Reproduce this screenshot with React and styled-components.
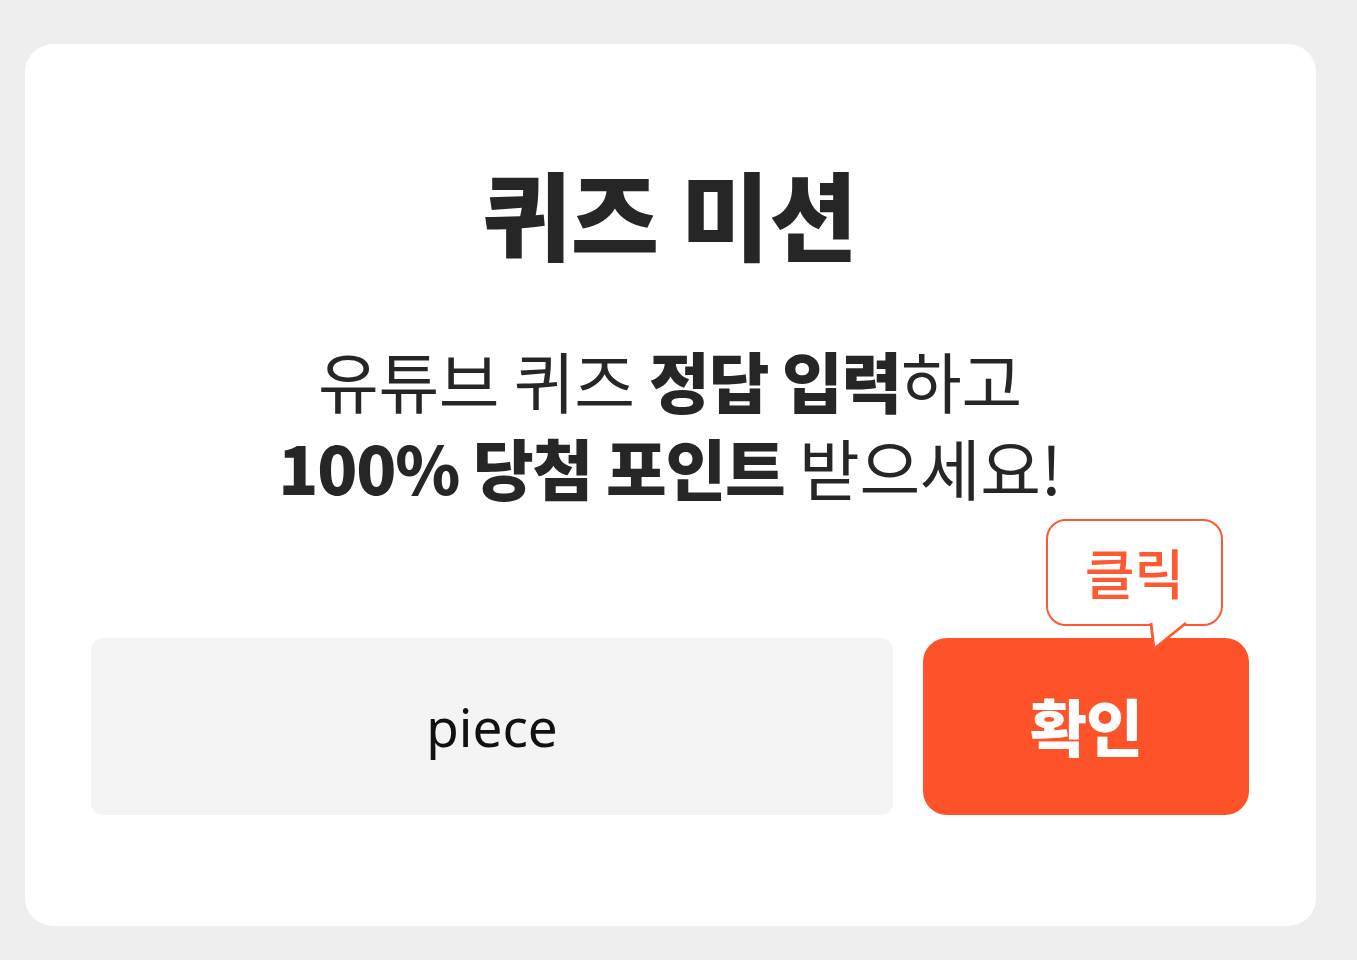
import React from 'react'
import styled, { createGlobalStyle } from 'styled-components'

const GlobalStyle = createGlobalStyle`
  html, body {
    margin: 0;
    padding: 0;
    background: #eeeeee;
  }
  body {
    font-family: "Noto Sans CJK KR", "Noto Sans", sans-serif;
  }
`

function App() {
  return (
    <Page>
      <GlobalStyle />
      <Card>
        <Title>퀴즈 미션</Title>
        <Desc>
          유튜브 퀴즈 <b>정답 입력</b>하고
          <br />
          <b>100% 당첨 포인트</b> 받으세요!
        </Desc>
        <AnswerRow>
          <AnswerInput defaultValue="piece" />
          <ButtonWrap>
            <Bubble>
              클릭
              <BubbleTail viewBox="0 0 40 28">
                <path d="M1 0 L4 26 L36 0" fill="#fff" stroke="#fc5a33" strokeWidth="2.8" strokeLinejoin="round" />
              </BubbleTail>
            </Bubble>
            <ConfirmButton>확인</ConfirmButton>
          </ButtonWrap>
        </AnswerRow>
      </Card>
    </Page>
  )
}

export default App

const Page = styled.div`
  padding: 44px 41px 34px 25px;
  min-height: 960px;
  box-sizing: border-box;
`

const Card = styled.div`
  background: #fff;
  border-radius: 28px;
  height: 882px;
  box-sizing: border-box;
  padding: 120px 67px 0 66px;
  display: flex;
  flex-direction: column;
  align-items: center;
`

const Title = styled.h1`
  margin: 0;
  font-size: 96px;
  font-weight: 900;
  line-height: 1;
  letter-spacing: 0;
  color: #262626;
`

const Desc = styled.p`
  margin: 76px 0 0;
  text-align: center;
  font-size: 66px;
  line-height: 87px;
  font-weight: 400;
  letter-spacing: -0.3px;
  color: #262626;

  b {
    font-weight: 900;
    letter-spacing: -1.2px;
  }
`

const AnswerRow = styled.div`
  margin-top: 128px;
  width: 100%;
  display: flex;
  gap: 30px;
`

const AnswerInput = styled.input`
  flex: 1;
  height: 177px;
  border: none;
  outline: none;
  border-radius: 12px;
  background: #f4f4f4;
  text-align: center;
  font-family: "Noto Sans", sans-serif;
  font-size: 53px;
  color: #111;
  padding: 0;
`

const ButtonWrap = styled.div`
  position: relative;
  width: 326px;
`

const ConfirmButton = styled.button`
  width: 100%;
  height: 177px;
  border: none;
  border-radius: 24px;
  background: #fe5328;
  color: #fff;
  font-family: "Noto Sans CJK KR", sans-serif;
  font-size: 62px;
  font-weight: 900;
  letter-spacing: -1px;
  padding: 0 0 4px;
`

const Bubble = styled.div`
  position: absolute;
  left: 123px;
  top: -119px;
  width: 177px;
  height: 107px;
  box-sizing: border-box;
  border: 2.8px solid #fc5a33;
  border-radius: 20px;
  background: #fff;
  color: #fc5a33;
  font-size: 54px;
  font-weight: 500;
  letter-spacing: 0;
  display: flex;
  align-items: center;
  justify-content: center;
  padding-bottom: 2px;
  z-index: 2;
`

const BubbleTail = styled.svg`
  position: absolute;
  left: 102px;
  bottom: -27px;
  width: 40px;
  height: 28px;
  overflow: visible;
`
